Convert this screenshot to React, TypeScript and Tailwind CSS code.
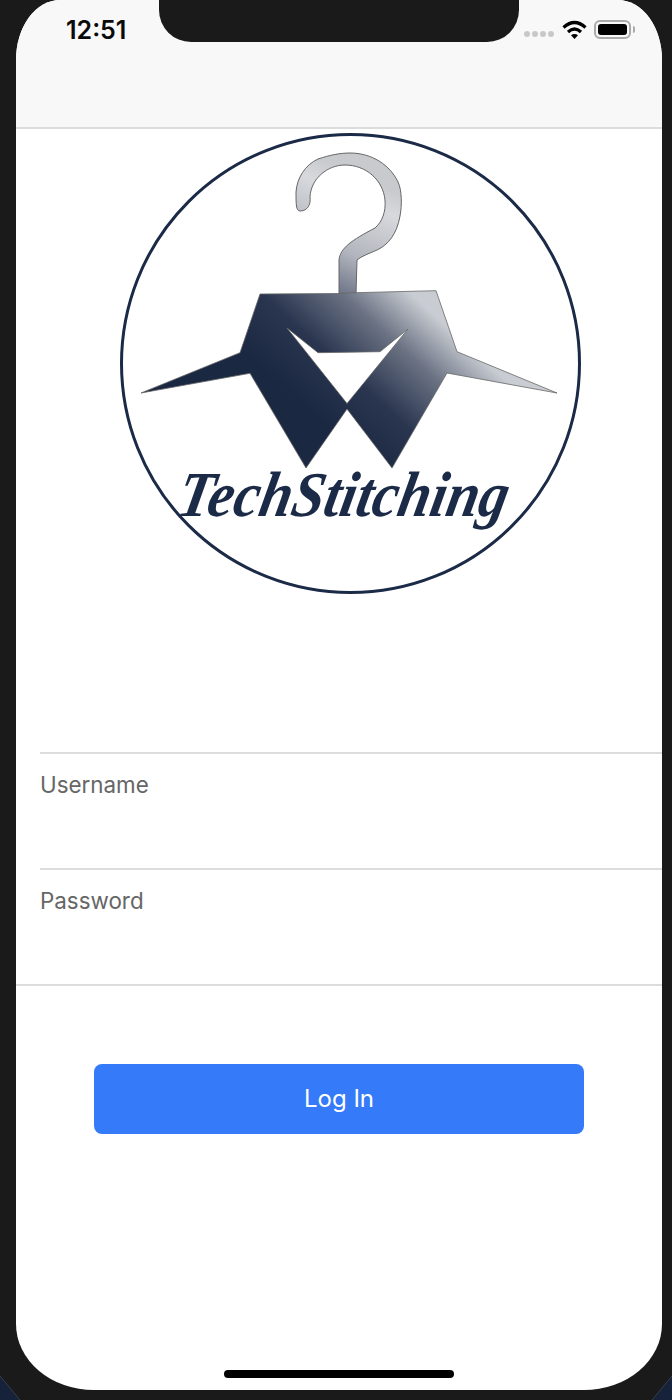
import React from 'react';

const fontStack = { fontFamily: 'Inter, "Liberation Sans", sans-serif' };

const WifiIcon = () => (
  <svg width="25" height="19" viewBox="0 0 25 19" fill="none">
    <path d="M1.5 7.5 Q12.5 -2.5 23.5 7.5" stroke="#000" strokeWidth="3.2" />
    <path d="M6 12 Q12.5 6 19 12" stroke="#000" strokeWidth="3.2" />
    <path d="M9 15.2 Q12.5 12.6 16 15.2 L12.5 19 Z" fill="#000" />
  </svg>
);

const Logo = () => (
  <svg width="462" height="462" viewBox="120 133 462 462" className="block">
    <defs>
      <linearGradient id="hanger" gradientUnits="userSpaceOnUse" x1="330" y1="430" x2="435" y2="315">
        <stop offset="0" stopColor="#1b2842" />
        <stop offset="0.35" stopColor="#2a3650" />
        <stop offset="0.7" stopColor="#6b7283" />
        <stop offset="1" stopColor="#c9cdd3" />
      </linearGradient>
      <linearGradient id="hook" gradientUnits="userSpaceOnUse" x1="345" y1="295" x2="392" y2="190">
        <stop offset="0" stopColor="#6f7689" />
        <stop offset="0.35" stopColor="#b2b5bd" />
        <stop offset="0.8" stopColor="#d8d9dd" />
        <stop offset="1" stopColor="#c8cace" />
      </linearGradient>
    </defs>
    <circle cx="350.5" cy="363.5" r="229" fill="#fff" stroke="#1b2a47" strokeWidth="3" />
    {/* hook */}
    <path
      fill="url(#hook)"
      stroke="#666"
      strokeWidth="1"
      d="M339 294 L339 260 C340 248 352 240 375 228 C382 222 386 212 385 200 C383 180 366 165 345 165
         C328 165 311 178 310 197 C311 204 308 211 300 211 C296 211 296 204 296 192 C297 178 305 165 318 159
         C330 155 340 153 350 153 C372 153 390 165 398 182 C402 190 402 206 400 216 C397 234 388 245 377 250
         C368 254 362 256 357 260 L356 294 Z"
    />
    {/* hanger body */}
    <path
      fillRule="evenodd"
      fill="url(#hanger)"
      stroke="#666"
      strokeWidth="0.8"
      d="M339 293.5 L356 292.7 L436 290.7 L457 351.7 L557 393 L447 373 L392 468 L347 409
         L306 468 L250 373.3 L141 393 L240 352.7 L260 294 Z
         M287 328 L318 352.7 L380 351.7 L408 329 L347 403.5 Z"
    />
    <text
      transform="translate(175 516) skewX(-11)"
      textLength="330"
      lengthAdjust="spacingAndGlyphs"
      fontFamily='"Liberation Serif", serif'
      fontStyle="italic"
      fontWeight="700"
      fontSize="64"
      fill="#1b2a47"
    >
      TechStitching
    </text>
  </svg>
);

const FormRow = ({ label, inset }: { label: string; inset?: boolean }) => (
  <div className={`h-[116px] border-t-2 border-[#dcdcdc] pt-[16px] ${inset ? 'ml-6' : ''}`}>
    <div className="text-[22.4px] leading-[30px] text-[#666]">{label}</div>
  </div>
);

const CornerWedge = ({ side }: { side: 'left' | 'right' }) => (
  <svg
    width="22"
    height="24"
    viewBox="0 0 22 24"
    className={`absolute bottom-0 ${side === 'left' ? 'left-0' : 'right-0 -scale-x-100'}`}
  >
    <path d="M0 0 L0 24 L20 24 Z" fill="#16213a" />
    <path d="M0 0 L20 24" stroke="#3a3f4a" strokeWidth="1" />
  </svg>
);

export default function App() {
  return (
    <div className="relative w-[672px] h-[1400px] bg-[#1a1a1a] pl-4 overflow-hidden" style={fontStack}>
      <div className="w-[646px] h-[1390px] bg-white flex flex-col rounded-tl-[44px_60px] rounded-tr-[44px_60px] rounded-bl-[78px_66px] rounded-br-[78px_66px] overflow-hidden">
        {/* Status bar + nav bar */}
        <div className="h-[129px] shrink-0 bg-[#f8f8f8] border-b-2 border-[#dcdcdc] flex items-start justify-between pt-[15px] pl-[50px] pr-[27px]">
          <span className="text-[25px] leading-[30px] font-semibold text-[#0a0a0a]">12:51</span>
          <div className="flex items-center pt-[5px]">
            <div className="flex gap-[2px] mr-[8px] mt-[8px]">
              <div className="w-[6px] h-[6px] rounded-full bg-[#c8c8c8]" />
              <div className="w-[6px] h-[6px] rounded-full bg-[#c8c8c8]" />
              <div className="w-[6px] h-[6px] rounded-full bg-[#c8c8c8]" />
              <div className="w-[6px] h-[6px] rounded-full bg-[#c8c8c8]" />
            </div>
            <WifiIcon />
            <div className="ml-[7px] w-[37px] h-[19px] rounded-[6px] border-2 border-[#aaa] p-[2px]">
              <div className="w-full h-full rounded-[3px] bg-black" />
            </div>
            <div className="ml-[2px] w-[2px] h-[7px] rounded-r-full bg-[#aaa]" />
          </div>
        </div>

        {/* Logo */}
        <div className="pl-[104px] pt-[4px]">
          <Logo />
        </div>

        {/* Form */}
        <div className="mt-[157px]">
          <FormRow label="Username" inset />
          <FormRow label="Password" inset />
          <div className="border-t-2 border-[#dcdcdc]" />
        </div>

        <div className="mt-[78px] ml-[78px] w-[490px] h-[70px] rounded-[8px] bg-[#347af9] flex items-center justify-center text-[24px] text-white">
          Log In
        </div>

        <div className="mt-auto mb-[12px] ml-[208px] w-[230px] h-[8px] rounded-full bg-black" />
      </div>

      {/* Notch */}
      <div className="absolute top-0 left-[159px] w-[360px] h-[42px] bg-[#1a1a1a] rounded-b-[32px]" />

      {/* Desktop wallpaper showing past the device corners */}
      <CornerWedge side="left" />
      <CornerWedge side="right" />
    </div>
  );
}
